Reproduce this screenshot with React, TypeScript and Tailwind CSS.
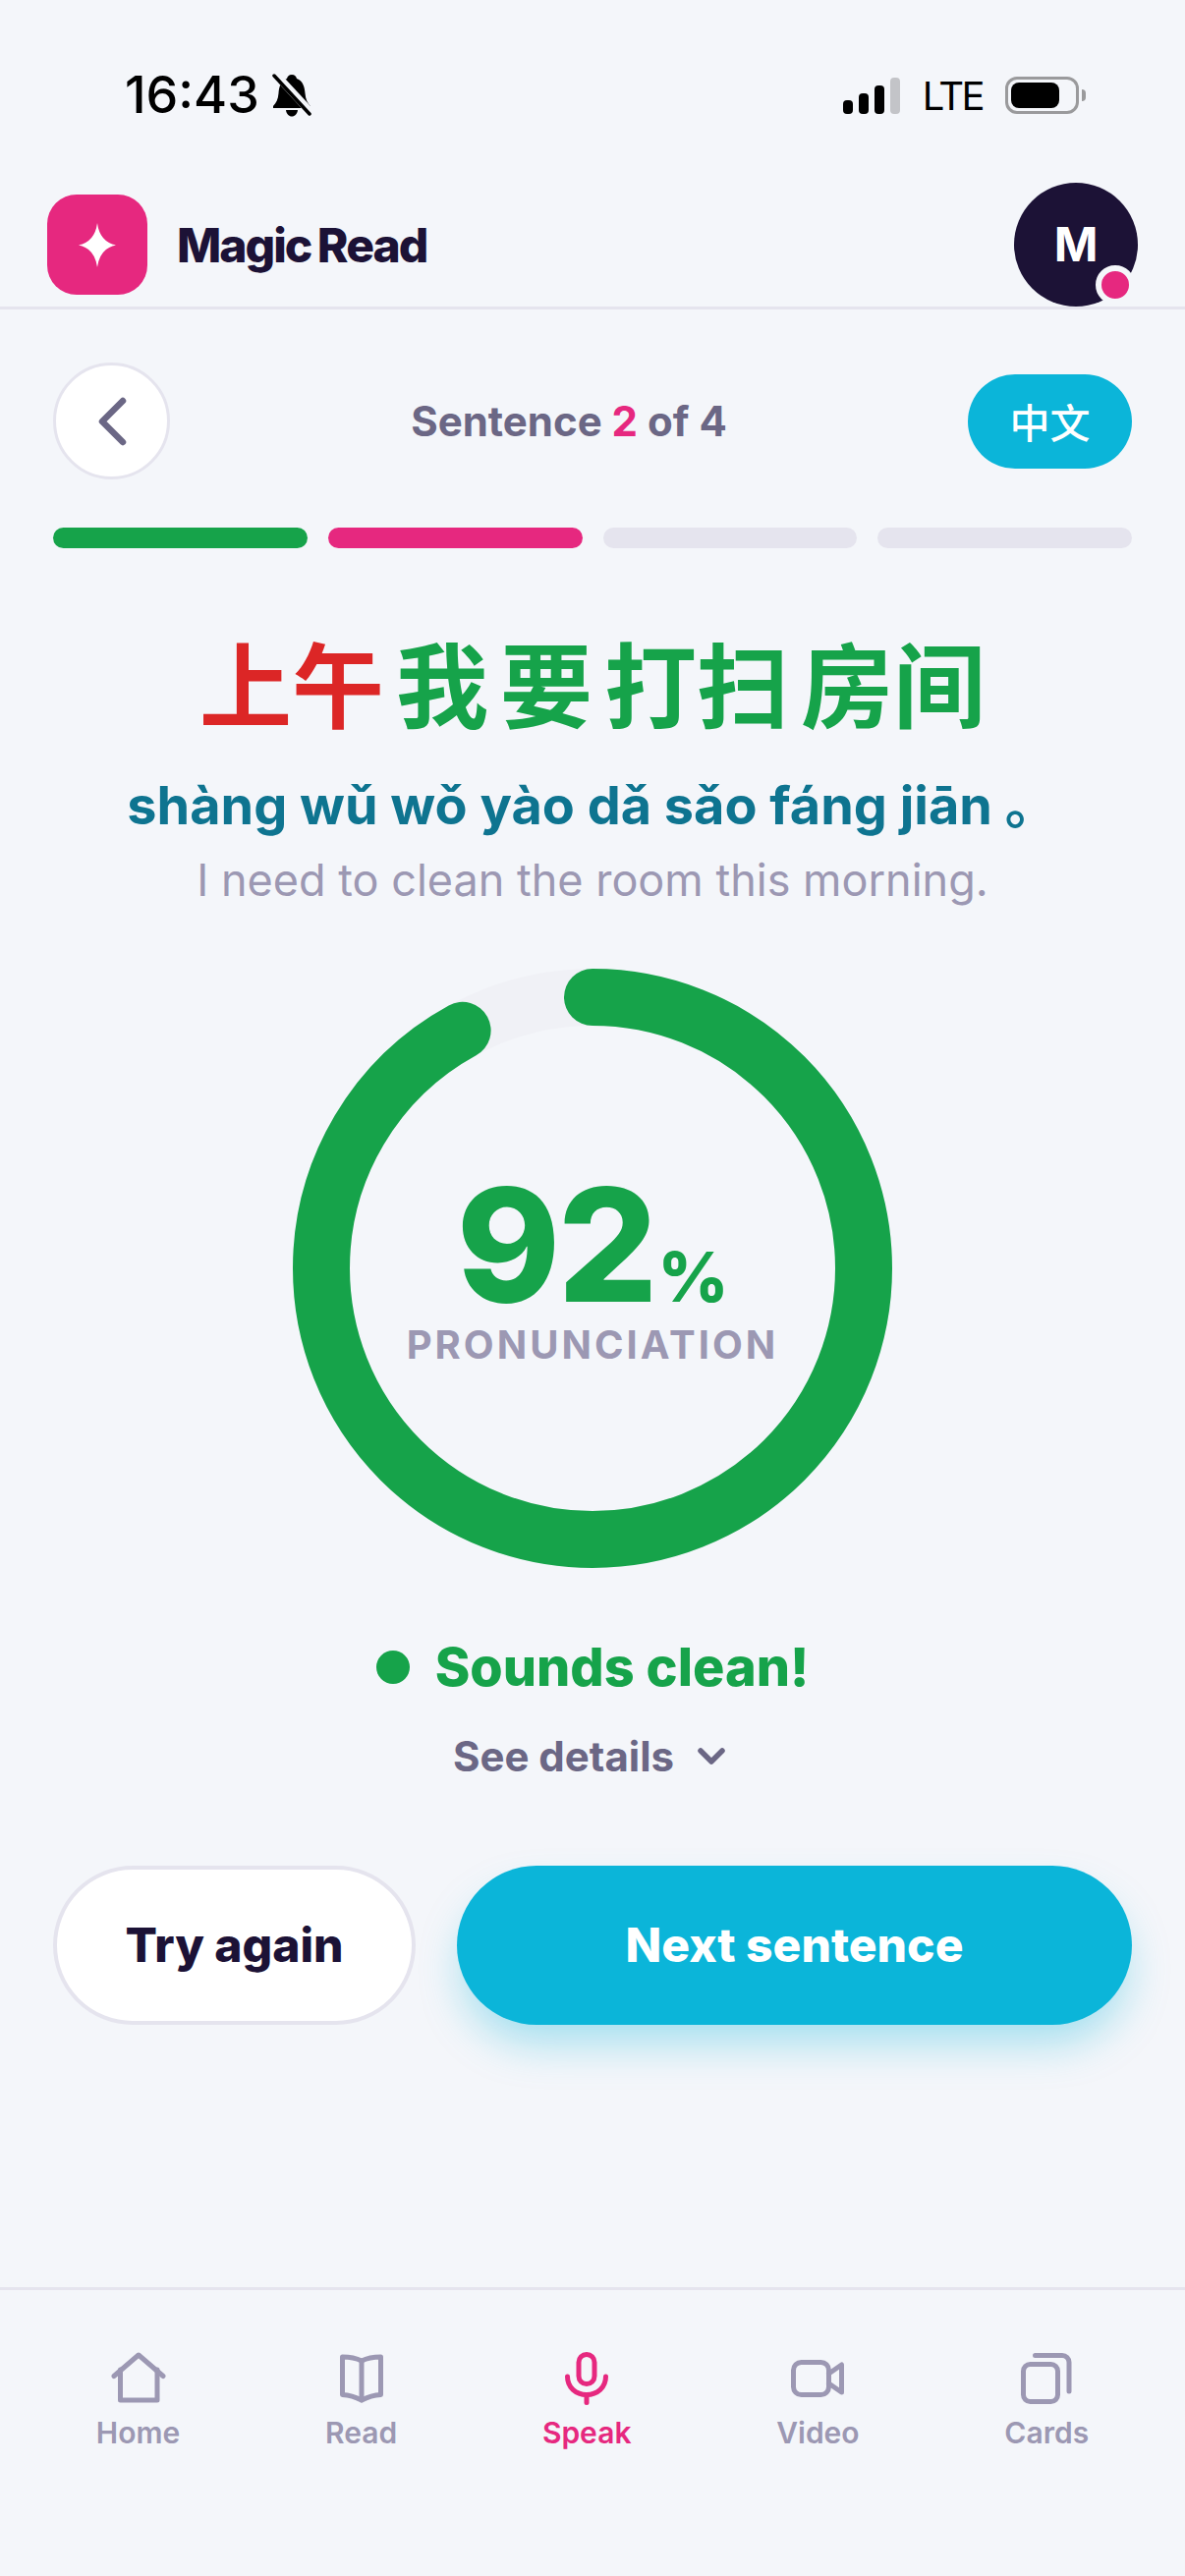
import React from "react";

const INTER = "font-['Inter','Noto_Sans_CJK_SC',sans-serif]";

function NavItem({ label, active, children }: { label: string; active?: boolean; children: React.ReactNode }) {
  return (
    <div className={`flex flex-col items-center ${active ? "text-[#e6287f]" : "text-[#9c98b3]"}`}>
      <div className="h-[56px] flex items-center justify-center">{children}</div>
      <span className="text-[30px] leading-[36px] font-semibold mt-[9px]">{label}</span>
    </div>
  );
}

export default function App() {
  return (
    <div className={`${INTER} w-[1206px] h-[2622px] bg-[#f4f6fa] flex flex-col overflow-hidden`}>
      {/* Status bar */}
      <div className="h-[186px] flex items-start justify-between pl-[127px] pr-[101px] pt-[66px] shrink-0">
        <div className="flex items-center gap-[13px] text-black">
          <span className="text-[52px] leading-[62px] font-medium">16:43</span>
          <svg width="40" height="44" viewBox="0 0 40 44">
            <path d="M20 1C23 1 24.500 3 25 5C31 7 33 13 33.500 20C34 26 36 30 39 33V35H1V33C4 30 6 26 6.500 20C7 13 9 7 15 5C15.500 3 17 1 20 1Z" fill="#000" />
            <path d="M14 37H26C25.500 41 23 43.500 20 43.500S14.500 41 14 37Z" fill="#000" />
            <path d="M3 0L40 40" stroke="#f4f6fa" strokeWidth="8" />
            <path d="M2 2L38 41" stroke="#000" strokeWidth="3.500" strokeLinecap="round" />
          </svg>
        </div>
        <div className="flex items-center pt-[12px]">
          <div className="flex items-end gap-[6px] h-[37px]">
            <div className="w-[10px] h-[14px] rounded-[4px] bg-black" />
            <div className="w-[10px] h-[21px] rounded-[4px] bg-black" />
            <div className="w-[10px] h-[29px] rounded-[4px] bg-black" />
            <div className="w-[10px] h-[37px] rounded-[4px] bg-[#c3c4c8]" />
          </div>
          <span className="ml-[23px] text-[40px] leading-[37px] font-normal tracking-[-2.500px] text-black">LTE</span>
          <div className="ml-[23px] w-[75px] h-[38px] rounded-[12px] border-[3px] border-[#9a9a9c] p-[3px]">
            <div className="w-[49px] h-full rounded-[8px] bg-black" />
          </div>
          <div className="ml-[3px] w-[4px] h-[12px] rounded-r-[4px] bg-[#9a9a9c]" />
        </div>
      </div>

      {/* App header */}
      <div className="h-[129px] shrink-0 border-b-[3px] border-[#e5e4ee] flex items-start justify-between pl-[48px] pr-[48px]">
        <div className="flex items-center gap-[30px] mt-[12px]">
          <div className="w-[102px] h-[102px] rounded-[30px] bg-[#e6287f] flex items-center justify-center">
            <svg width="38" height="45" viewBox="0 0 38 45">
              <path d="M19 0Q21.500 19 38 22.500Q21.500 26 19 45Q16.500 26 0 22.500Q16.500 19 19 0Z" fill="#fff" />
            </svg>
          </div>
          <span className="text-[48px] leading-[58px] font-extrabold tracking-[-2px] [word-spacing:-2px] text-[#1c1236] pt-[2px]">Magic Read</span>
        </div>
        <div className="relative w-[126px] h-[126px] rounded-full bg-[#1c1236] flex items-center justify-center">
          <span className="text-[48px] font-bold text-white leading-none">M</span>
          <div className="absolute right-[3px] bottom-[2px] w-[40px] h-[40px] rounded-full bg-[#e6287f] border-[6px] border-[#f4f6fa]" />
        </div>
      </div>

      {/* Sentence header */}
      <div className="shrink-0 flex items-center justify-between pl-[54px] pr-[54px] mt-[54px]">
        <div className="w-[119px] h-[119px] rounded-full bg-white border-[3px] border-[#e5e4ee] flex items-center justify-center">
          <svg width="40" height="52" viewBox="0 0 40 52" fill="none">
            <path d="M31 5 L10 26 L31 47" stroke="#6b6785" strokeWidth="6.500" strokeLinecap="round" strokeLinejoin="round" />
          </svg>
        </div>
        <div className="text-[42px] leading-[50px] font-bold text-[#6b6785]">
          Sentence <span className="text-[#e6287f]">2</span> of 4
        </div>
        <div className="w-[167px] h-[96px] rounded-full bg-[#0bb5d9] flex items-center justify-center text-white text-[41px] font-medium font-['Noto_Sans_CJK_SC',sans-serif]">
          中文
        </div>
      </div>

      {/* Progress */}
      <div className="shrink-0 flex gap-[21px] px-[54px] mt-[49px]">
        <div className="flex-1 h-[21px] rounded-full bg-[#16a34a]" />
        <div className="flex-1 h-[21px] rounded-full bg-[#e6287f]" />
        <div className="flex-1 h-[21px] rounded-full bg-[#e5e4ee]" />
        <div className="flex-1 h-[21px] rounded-full bg-[#e5e4ee]" />
      </div>

      {/* Sentence */}
      <div className="shrink-0 flex flex-col items-center mt-[76px]">
        <div className="flex gap-[12px] text-[94px] leading-[118px] font-bold font-['Noto_Sans_CJK_SC',sans-serif] text-[#16a34a]">
          <span className="text-[#dc2626]">上午</span>
          <span>我</span>
          <span>要</span>
          <span>打扫</span>
          <span>房间</span>
        </div>
        <div className="text-[54px] leading-[64px] font-bold text-[#0e7490] mt-[36px]">shàng wǔ wǒ yào dǎ sǎo fáng jiān 。</div>
        <div className="text-[45px] leading-[56px] font-normal text-[#9c98b3] mt-[16px]">I need to clean the room this morning.</div>
      </div>

      {/* Ring */}
      <div className="shrink-0 flex justify-center mt-[62px]">
        <div className="relative w-[610px] h-[610px]">
          <svg width="610" height="610" viewBox="0 0 610 610" fill="none">
            <circle cx="305" cy="305" r="276" stroke="#f0f1f6" strokeWidth="58" />
            <circle
              cx="305"
              cy="305"
              r="276"
              stroke="#16a34a"
              strokeWidth="58"
              strokeLinecap="round"
              strokeDasharray="1595.4 1734.2"
              transform="rotate(-90 305 305)"
            />
          </svg>
          <div className="absolute inset-0 flex flex-col items-center justify-center pb-[7px]">
            <div className="flex items-baseline text-[#16a34a] font-extrabold pt-[7px]">
              <span className="text-[160px] leading-[156px] tracking-[-3px]">92</span>
              <span className="text-[70px] leading-none font-extrabold ml-[3px]">%</span>
            </div>
            <div className="text-[40px] leading-[48px] font-bold tracking-[3px] text-[#9c98b3]">PRONUNCIATION</div>
          </div>
        </div>
      </div>

      {/* Result */}
      <div className="shrink-0 flex items-center justify-center gap-[26px] mt-[68px]">
        <div className="w-[34px] h-[34px] rounded-full bg-[#16a34a]" />
        <span className="text-[54px] leading-[66px] font-extrabold text-[#16a34a]">Sounds clean!</span>
      </div>
      <div className="shrink-0 flex items-center justify-center gap-[23px] pr-[6px] mt-[32px]">
        <span className="text-[42px] leading-[52px] font-bold text-[#6b6785]">See details</span>
        <svg width="30" height="20" viewBox="0 0 30 20" fill="none">
          <path d="M4 4 L15 15 L26 4" stroke="#6b6785" strokeWidth="5.500" strokeLinecap="round" strokeLinejoin="round" />
        </svg>
      </div>

      {/* Buttons */}
      <div className="shrink-0 flex gap-[42px] px-[54px] mt-[85px]">
        <div className="w-[369px] h-[162px] rounded-full bg-white border-[4px] border-[#e5e4ee] flex items-center justify-center text-[48px] font-extrabold text-[#1c1236]">
          Try again
        </div>
        <div className="flex-1 h-[162px] rounded-full bg-[#0bb5d9] shadow-[0_24px_44px_-6px_rgba(11,181,217,0.35)] flex items-center justify-center text-[48px] font-extrabold text-white">
          Next sentence
        </div>
      </div>

      <div className="flex-1" />

      {/* Nav */}
      <div className="shrink-0 h-[294px] border-t-[3px] border-[#e5e4ee] flex items-start justify-around px-[24px] pt-[62px]">
        <NavItem label="Home">
          <svg width="58" height="54" viewBox="0 0 58 54" fill="none" stroke="currentColor" strokeWidth="5" strokeLinecap="round" strokeLinejoin="round">
            <path d="M4 24.500 29 3l25 21.500" />
            <path d="M10.500 18V49H48V18" />
          </svg>
        </NavItem>
        <NavItem label="Read">
          <svg width="48" height="52" viewBox="0 0 48 52" fill="none" stroke="currentColor" strokeWidth="5" strokeLinecap="round" strokeLinejoin="round">
            <path d="M24 8C18 5 12 4 4.500 4V42.500C12 43 18 45 24 48C30 45 36 43 43.500 42.500V4C36 4 30 5 24 8Z" />
            <path d="M24 8V48" />
          </svg>
        </NavItem>
        <NavItem label="Speak" active>
          <svg width="48" height="58" viewBox="0 0 48 58" fill="none" stroke="currentColor" strokeWidth="5" strokeLinecap="round" strokeLinejoin="round">
            <rect x="16" y="4.500" width="16" height="30" rx="8" />
            <path d="M4.500 27C4.500 38 13 45.500 24 45.500S43.500 38 43.500 27" />
            <path d="M24 46V53.500" />
          </svg>
        </NavItem>
        <NavItem label="Video">
          <svg width="58" height="42" viewBox="0 0 58 42" fill="none" stroke="currentColor" strokeWidth="5" strokeLinecap="round" strokeLinejoin="round">
            <rect x="4.500" y="4.500" width="36" height="33" rx="8" />
            <path d="M40.500 16 53.500 7V35L40.500 26" />
          </svg>
        </NavItem>
        <NavItem label="Cards">
          <svg width="56" height="56" viewBox="0 0 56 56" fill="none" stroke="currentColor" strokeWidth="5" strokeLinecap="round" strokeLinejoin="round">
            <rect x="4.500" y="13.500" width="35" height="38" rx="7" />
            <path d="M16.500 4.500H44a7 7 0 0 1 7 7V41" />
          </svg>
        </NavItem>
      </div>
    </div>
  );
}
